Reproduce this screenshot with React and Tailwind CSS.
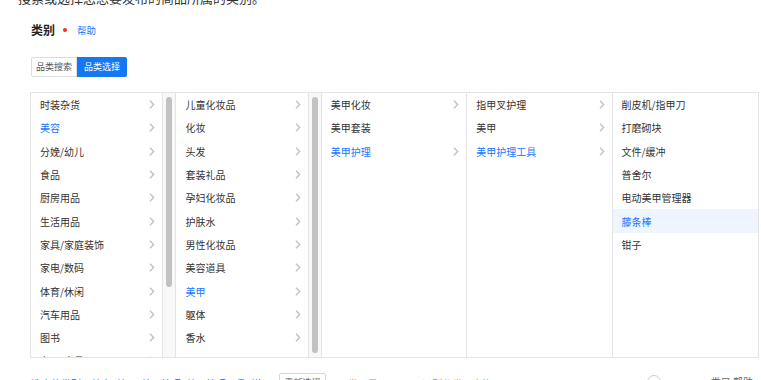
import React from 'react';

const font = { fontFamily: '"Noto Sans CJK SC", "Noto Sans", sans-serif' };

const columns = [
  {
    thumb: 'h-[190px]',
    items: [
      { t: '时装杂货', more: true },
      { t: '美容', more: true, active: true },
      { t: '分娩/幼儿', more: true },
      { t: '食品', more: true },
      { t: '厨房用品', more: true },
      { t: '生活用品', more: true },
      { t: '家具/家庭装饰', more: true },
      { t: '家电/数码', more: true },
      { t: '体育/休闲', more: true },
      { t: '汽车用品', more: true },
      { t: '图书', more: true },
      { t: '办公/文具', more: true },
    ],
  },
  {
    thumb: 'h-[256px]',
    items: [
      { t: '儿童化妆品', more: true },
      { t: '化妆', more: true },
      { t: '头发', more: true },
      { t: '套装礼品', more: true },
      { t: '孕妇化妆品', more: true },
      { t: '护肤水', more: true },
      { t: '男性化妆品', more: true },
      { t: '美容道具', more: true },
      { t: '美甲', more: true, active: true },
      { t: '躯体', more: true },
      { t: '香水', more: true },
    ],
  },
  {
    items: [
      { t: '美甲化妆', more: true },
      { t: '美甲套装' },
      { t: '美甲护理', more: true, active: true },
    ],
  },
  {
    items: [
      { t: '指甲叉护理', more: true },
      { t: '美甲', more: true },
      { t: '美甲护理工具', more: true, active: true },
    ],
  },
  {
    items: [
      { t: '削皮机/指甲刀' },
      { t: '打磨砌块' },
      { t: '文件/缓冲' },
      { t: '普舍尔' },
      { t: '电动美甲管理器' },
      { t: '藤条棒', active: true, selected: true },
      { t: '钳子' },
    ],
  },
];

function Chevron() {
  return (
    <svg width="6" height="9" viewBox="0 0 6 9" className="shrink-0">
      <path d="M1 0.8 L4.6 4.5 L1 8.2" fill="none" stroke="#c4c4c4" strokeWidth="1.5" />
    </svg>
  );
}

function Column({ col, last }) {
  return (
    <div className={`flex h-full overflow-hidden ${last ? '' : 'border-r border-[#e4e4e8]'}`}>
      <div className="flex-1 min-w-0">
        {col.items.map((it) => (
          <div
            key={it.t}
            className={`h-[23.3px] flex items-center justify-between pl-[9px] pr-[7px] text-[10px] ${
              it.selected ? 'bg-[#eef5ff]' : ''
            } ${it.active ? 'text-[#1677ff]' : 'text-[#333]'}`}
          >
            <span className="whitespace-nowrap">{it.t}</span>
            {it.more && <Chevron />}
          </div>
        ))}
      </div>
      {col.thumb && (
        <div className="w-[13px] shrink-0 border-l border-[#e4e4e8] bg-[#f8f8f8] pt-[4px] flex justify-center">
          <div className={`w-[6px] rounded-full bg-[#c2c2c2] ${col.thumb}`} />
        </div>
      )}
    </div>
  );
}

export default function App() {
  return (
    <div className="w-[761px] h-[380px] overflow-hidden bg-white" style={font}>
      <div className="pl-[18px] -mt-[9px] text-[13px] leading-[14px] text-[#333] whitespace-nowrap">
        搜索或选择您想要发布的商品所属的类别。
      </div>

      <div className="pl-[31px] mt-[18px] flex items-center h-[14px]">
        <span className="text-[12px] font-bold text-[#222]">类别</span>
        <span className="ml-[8px] w-[4px] h-[4px] rounded-full bg-[#f0302a]" />
        <span className="ml-[10px] text-[9.5px] text-[#1677ff]">帮助</span>
      </div>

      <div className="pl-[31px] mt-[20px] flex h-[20px]">
        <div className="w-[46px] flex items-center justify-center border border-[#ddd] rounded-l-[2px] text-[9px] text-[#555]">
          品类搜索
        </div>
        <div className="w-[50px] flex items-center justify-center bg-[#1677f5] rounded-r-[2px] text-[9px] text-white">
          品类选择
        </div>
      </div>

      <div className="ml-[30px] mt-[15px] w-[729px] h-[266px] border border-[#e4e4e8] grid grid-cols-5 overflow-hidden">
        {columns.map((c, i) => (
          <Column key={i} col={c} last={i === columns.length - 1} />
        ))}
      </div>

      <div className="pl-[31px] mt-[15px] flex items-start text-[10px] whitespace-nowrap">
        <span className="mt-[3px] text-[#1a5fd6]">选中的类别：美容; 美甲; 美甲护理; 美甲护理工具; 钳子</span>
        <span className="ml-[8px] w-[47px] h-[20px] flex items-center justify-center border border-[#d6d6d6] rounded-[2px] text-[9px] text-[#555]">
          重新选择
        </span>
        <span className="ml-[17px] mt-[3px] text-[#888]">*类目是 xxxx 以下识别分类，查询</span>
        <span className="ml-auto mr-[8px] mt-[1px] flex items-center">
          <span className="w-[14px] h-[14px] rounded-full border border-[#ccc]" />
          <span className="ml-[28px] text-[#666]">xxxx 类目 帮助</span>
        </span>
      </div>
    </div>
  );
}
